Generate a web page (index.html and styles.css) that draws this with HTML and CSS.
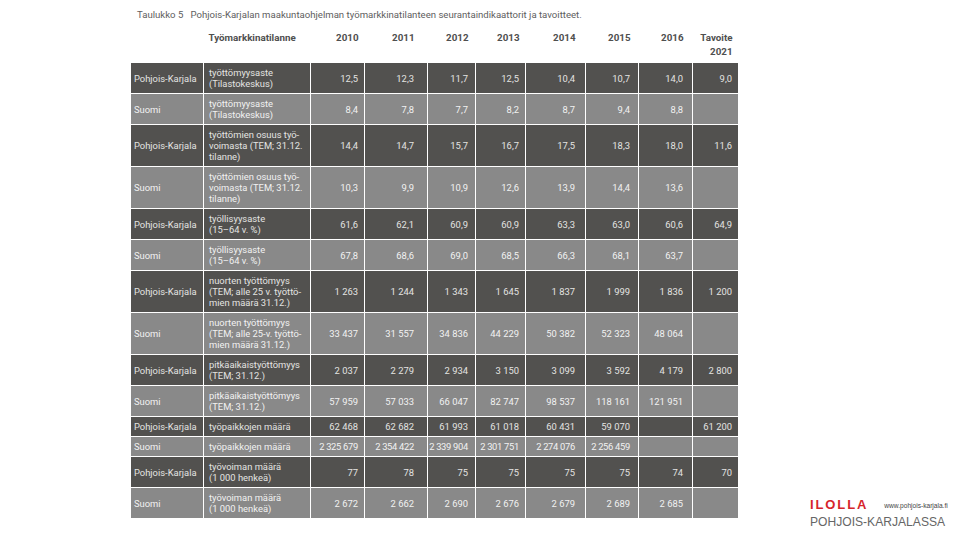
FILE: index.html
```html
<!DOCTYPE html>
<html lang="fi">
<head>
<meta charset="utf-8">
<title>Taulukko 5</title>
<link rel="stylesheet" href="styles.css">
</head>
<body>
<div class="page">
  <main class="content">
    <p class="caption">Taulukko 5&nbsp;&nbsp;&nbsp;Pohjois-Karjalan maakuntaohjelman työmarkkinatilanteen seurantaindikaattorit ja tavoitteet.</p>
    <table class="tbl">
      <colgroup>
        <col class="c-reg"><col class="c-desc"><col class="c-10"><col class="c-11"><col class="c-12"><col class="c-13"><col class="c-14"><col class="c-15"><col class="c-16"><col class="c-21">
      </colgroup>
      <thead>
        <tr class="head">
          <th></th>
          <th class="h-desc">Työmarkkinatilanne</th>
          <th class="n p10">2010</th><th class="n p11">2011</th><th class="n p12">2012</th><th class="n p13">2013</th><th class="n p14">2014</th><th class="n p15">2015</th><th class="n p16">2016</th><th class="n p21">Tavoite<br>2021</th>
        </tr>
      </thead>
      <tbody>
        <tr class="dark"><td class="reg">Pohjois-Karjala</td><td class="desc">työttömyysaste<br>(Tilastokeskus)</td>
          <td class="n p10"><div>12,5</div></td><td class="n p11"><div>12,3</div></td><td class="n p12"><div>11,7</div></td><td class="n p13"><div>12,5</div></td><td class="n p14"><div>10,4</div></td><td class="n p15"><div>10,7</div></td><td class="n p16"><div>14,0</div></td><td class="n p21"><div>9,0</div></td></tr>
        <tr class="light"><td class="reg">Suomi</td><td class="desc">työttömyysaste<br>(Tilastokeskus)</td>
          <td class="n p10"><div>8,4</div></td><td class="n p11"><div>7,8</div></td><td class="n p12"><div>7,7</div></td><td class="n p13"><div>8,2</div></td><td class="n p14"><div>8,7</div></td><td class="n p15"><div>9,4</div></td><td class="n p16"><div>8,8</div></td><td class="n p21"><div></div></td></tr>
        <tr class="dark"><td class="reg">Pohjois-Karjala</td><td class="desc">työttömien osuus työ-<br>voimasta (TEM; 31.12.<br>tilanne)</td>
          <td class="n p10"><div>14,4</div></td><td class="n p11"><div>14,7</div></td><td class="n p12"><div>15,7</div></td><td class="n p13"><div>16,7</div></td><td class="n p14"><div>17,5</div></td><td class="n p15"><div>18,3</div></td><td class="n p16"><div>18,0</div></td><td class="n p21"><div>11,6</div></td></tr>
        <tr class="light"><td class="reg">Suomi</td><td class="desc">työttömien osuus työ-<br>voimasta (TEM; 31.12.<br>tilanne)</td>
          <td class="n p10"><div>10,3</div></td><td class="n p11"><div>9,9</div></td><td class="n p12"><div>10,9</div></td><td class="n p13"><div>12,6</div></td><td class="n p14"><div>13,9</div></td><td class="n p15"><div>14,4</div></td><td class="n p16"><div>13,6</div></td><td class="n p21"><div></div></td></tr>
        <tr class="dark"><td class="reg">Pohjois-Karjala</td><td class="desc">työllisyysaste<br>(15–64 v. %)</td>
          <td class="n p10"><div>61,6</div></td><td class="n p11"><div>62,1</div></td><td class="n p12"><div>60,9</div></td><td class="n p13"><div>60,9</div></td><td class="n p14"><div>63,3</div></td><td class="n p15"><div>63,0</div></td><td class="n p16"><div>60,6</div></td><td class="n p21"><div>64,9</div></td></tr>
        <tr class="light"><td class="reg">Suomi</td><td class="desc">työllisyysaste<br>(15–64 v. %)</td>
          <td class="n p10"><div>67,8</div></td><td class="n p11"><div>68,6</div></td><td class="n p12"><div>69,0</div></td><td class="n p13"><div>68,5</div></td><td class="n p14"><div>66,3</div></td><td class="n p15"><div>68,1</div></td><td class="n p16"><div>63,7</div></td><td class="n p21"><div></div></td></tr>
        <tr class="dark"><td class="reg">Pohjois-Karjala</td><td class="desc">nuorten työttömyys<br>(TEM; alle 25 v. työttö-<br>mien määrä 31.12.)</td>
          <td class="n p10"><div>1 263</div></td><td class="n p11"><div>1 244</div></td><td class="n p12"><div>1 343</div></td><td class="n p13"><div>1 645</div></td><td class="n p14"><div>1 837</div></td><td class="n p15"><div>1 999</div></td><td class="n p16"><div>1 836</div></td><td class="n p21"><div>1 200</div></td></tr>
        <tr class="light"><td class="reg">Suomi</td><td class="desc">nuorten työttömyys<br>(TEM; alle 25-v. työttö-<br>mien määrä 31.12.)</td>
          <td class="n p10"><div>33 437</div></td><td class="n p11"><div>31 557</div></td><td class="n p12"><div>34 836</div></td><td class="n p13"><div>44 229</div></td><td class="n p14"><div>50 382</div></td><td class="n p15"><div>52 323</div></td><td class="n p16"><div>48 064</div></td><td class="n p21"><div></div></td></tr>
        <tr class="dark"><td class="reg">Pohjois-Karjala</td><td class="desc">pitkäaikaistyöttömyys<br>(TEM; 31.12.)</td>
          <td class="n p10"><div>2 037</div></td><td class="n p11"><div>2 279</div></td><td class="n p12"><div>2 934</div></td><td class="n p13"><div>3 150</div></td><td class="n p14"><div>3 099</div></td><td class="n p15"><div>3 592</div></td><td class="n p16"><div>4 179</div></td><td class="n p21"><div>2 800</div></td></tr>
        <tr class="light"><td class="reg">Suomi</td><td class="desc">pitkäaikaistyöttömyys<br>(TEM; 31.12.)</td>
          <td class="n p10"><div>57 959</div></td><td class="n p11"><div>57 033</div></td><td class="n p12"><div>66 047</div></td><td class="n p13"><div>82 747</div></td><td class="n p14"><div>98 537</div></td><td class="n p15"><div>118 161</div></td><td class="n p16"><div>121 951</div></td><td class="n p21"><div></div></td></tr>
        <tr class="dark one"><td class="reg">Pohjois-Karjala</td><td class="desc">työpaikkojen määrä</td>
          <td class="n p10"><div>62 468</div></td><td class="n p11"><div>62 682</div></td><td class="n p12"><div>61 993</div></td><td class="n p13"><div>61 018</div></td><td class="n p14"><div>60 431</div></td><td class="n p15"><div>59 070</div></td><td class="n p16"><div></div></td><td class="n p21"><div>61 200</div></td></tr>
        <tr class="light one"><td class="reg">Suomi</td><td class="desc">työpaikkojen määrä</td>
          <td class="n p10 w"><div>2 325 679</div></td><td class="n p11 w"><div>2 354 422</div></td><td class="n p12 w"><div>2 339 904</div></td><td class="n p13 w"><div>2 301 751</div></td><td class="n p14 w"><div>2 274 076</div></td><td class="n p15 w"><div>2 256 459</div></td><td class="n p16"><div></div></td><td class="n p21"><div></div></td></tr>
        <tr class="dark"><td class="reg">Pohjois-Karjala</td><td class="desc">työvoiman määrä<br>(1 000 henkeä)</td>
          <td class="n p10"><div>77</div></td><td class="n p11"><div>78</div></td><td class="n p12"><div>75</div></td><td class="n p13"><div>75</div></td><td class="n p14"><div>75</div></td><td class="n p15"><div>75</div></td><td class="n p16"><div>74</div></td><td class="n p21"><div>70</div></td></tr>
        <tr class="light"><td class="reg">Suomi</td><td class="desc">työvoiman määrä<br>(1 000 henkeä)</td>
          <td class="n p10"><div>2 672</div></td><td class="n p11"><div>2 662</div></td><td class="n p12"><div>2 690</div></td><td class="n p13"><div>2 676</div></td><td class="n p14"><div>2 679</div></td><td class="n p15"><div>2 689</div></td><td class="n p16"><div>2 685</div></td><td class="n p21"><div></div></td></tr>
      </tbody>
    </table>
  </main>
  <aside class="brand">
    <div class="brand-top">
      <span class="ilolla">ILOLLA</span>
      <span class="url">www.pohjois-karjala.fi</span>
    </div>
    <div class="brand-bottom">POHJOIS-KARJALASSA</div>
  </aside>
</div>
</body>
</html>
```

FILE: styles.css
```css
html, body {
  margin: 0;
  padding: 0;
  background: #ffffff;
}

body {
  font-family: Roboto, "Liberation Sans", Arial, sans-serif;
  color: #555;
}

.page {
  width: 960px;
  height: 540px;
  display: flex;
  box-sizing: border-box;
  padding-left: 130px;
}

.content {
  width: 608px;
  display: flex;
  flex-direction: column;
}

.caption {
  margin: 8px 0 0 7px;
  font-size: 9.6px;
  line-height: 14px;
  color: #5e5e5e;
  white-space: nowrap;
}

.tbl {
  margin-top: 9px;
  width: 608px;
  table-layout: fixed;
  border-collapse: collapse;
  font-size: 9.4px;
}

.c-reg { width: 73px; }
.c-desc { width: 107px; }
.c-10 { width: 54px; }
.c-11 { width: 63px; }
.c-12 { width: 48px; }
.c-13 { width: 50px; }
.c-14 { width: 60px; }
.c-15 { width: 53px; }
.c-16 { width: 54px; }
.c-21 { width: 46px; }

.head th {
  height: 31px;
  padding: 0;
  vertical-align: top;
  font-size: 9.8px;
  line-height: 14px;
  font-weight: 700;
  color: #4f4f4f;
  text-align: right;
  border: none;
}

.head th.h-desc {
  text-align: left;
  padding-left: 5px;
}

.tbl td {
  border: 1px solid #ffffff;
  padding: 4px 0;
  line-height: 11px;
  vertical-align: middle;
  overflow: visible;
  white-space: nowrap;
}

.tbl td.p15 {
  border-left: none;
}

.dark td {
  background: #52514f;
  color: #e4e4e2;
}

.light td {
  background: #898989;
  color: #f2f2f2;
}

.tbl td.reg {
  padding-left: 3px;
}

.tbl td.desc {
  padding-left: 5px;
}

.tbl td.n div {
  display: flex;
  justify-content: flex-end;
  min-height: 11px;
}

.p10 { padding-right: 6px !important; }
.p11 { padding-right: 13px !important; }
.p12 { padding-right: 7px !important; }
.p13 { padding-right: 6px !important; }
.p14 { padding-right: 10px !important; }
.p15 { padding-right: 8px !important; }
.p16 { padding-right: 9px !important; }
.p21 { padding-right: 6px !important; }

.tbl td.w { letter-spacing: -0.3px; }

.brand {
  margin-left: auto;
  align-self: flex-end;
  width: 145px;
  margin-right: 5px;
  padding-bottom: 11px;
  display: flex;
  flex-direction: column;
  font-family: "Liberation Sans", Arial, sans-serif;
}

.brand-top {
  display: flex;
  align-items: center;
  gap: 16px;
}

.ilolla {
  font-size: 13px;
  line-height: 14px;
  font-weight: 700;
  color: #d6252b;
  letter-spacing: 1.9px;
}

.url {
  font-size: 6.6px;
  color: #444;
}

.brand-bottom {
  margin-top: 4px;
  font-size: 12.1px;
  line-height: 13px;
  color: #666;
  white-space: nowrap;
}
```
